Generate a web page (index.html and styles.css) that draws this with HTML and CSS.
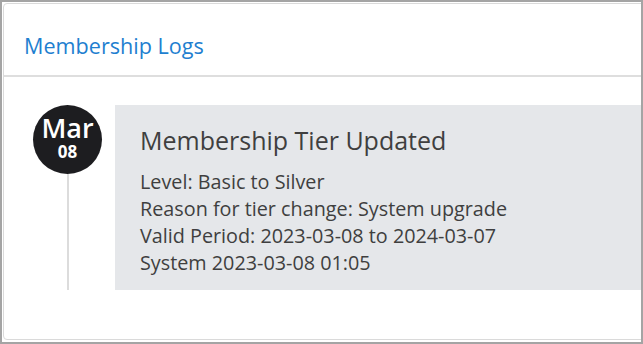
FILE: index.html
```html
<!DOCTYPE html>
<html>
<head>
<meta charset="utf-8">
<link rel="stylesheet" href="styles.css">
</head>
<body>
<div class="frame">
  <div class="card">
    <div class="card-header">Membership Logs</div>
    <div class="card-body">
      <div class="timeline-item">
        <div class="marker">
          <div class="date-circle">
            <span class="month">Mar</span>
            <span class="day">08</span>
          </div>
          <div class="line"></div>
        </div>
        <div class="entry">
          <div class="entry-title">Membership Tier Updated</div>
          <div class="entry-line">Level: Basic to Silver</div>
          <div class="entry-line">Reason for tier change: System upgrade</div>
          <div class="entry-line">Valid Period: 2023-03-08 to 2024-03-07</div>
          <div class="entry-line">System 2023-03-08 01:05</div>
        </div>
      </div>
    </div>
  </div>
</div>
</body>
</html>
```

FILE: styles.css
```css
* { box-sizing: border-box; }
html, body { margin: 0; padding: 0; background: #fff; }
body { font-family: "Open Sans", "Noto Sans", sans-serif; }
.frame {
  width: 643px;
  height: 344px;
  border: 2px solid #a4a4a4;
  padding: 1px 0 2px 1px;
  overflow: hidden;
  background: #fff;
}
.card {
  height: 100%;
  margin-right: -12px;
  border: 1px solid #dadada;
  border-radius: 4px;
  background: #fff;
}
.card-header {
  height: 73px;
  padding: 29px 0 0 20px;
  font-size: 21.6px;
  line-height: 26px;
  color: #1f7fd0;
  border-bottom: 2px solid #dedede;
}
.card-body {
  padding: 28px 0 0 29px;
}
.timeline-item {
  display: flex;
  gap: 13px;
}
.marker {
  width: 69px;
  display: flex;
  flex-direction: column;
  align-items: center;
}
.date-circle {
  width: 69px;
  height: 69px;
  border-radius: 50%;
  background: #1d1d20;
  color: #fff;
  display: flex;
  flex-direction: column;
  align-items: center;
  justify-content: center;
  gap: 2px;
  padding-bottom: 5px;
}
.month { font-size: 27px; line-height: 27px; font-weight: 600; }
.day { font-size: 17px; line-height: 17px; font-weight: 700; }
.line {
  width: 2px;
  flex: 1;
  background: #dcdcdc;
}
.entry {
  flex: 1;
  background: #e5e7ea;
  padding: 19px 0 14px 25px;
  color: #3f3f3f;
}
.entry-title {
  font-size: 25px;
  line-height: 32px;
  margin-bottom: 12px;
}
.entry-line {
  font-size: 19.8px;
  line-height: 27px;
}
```
